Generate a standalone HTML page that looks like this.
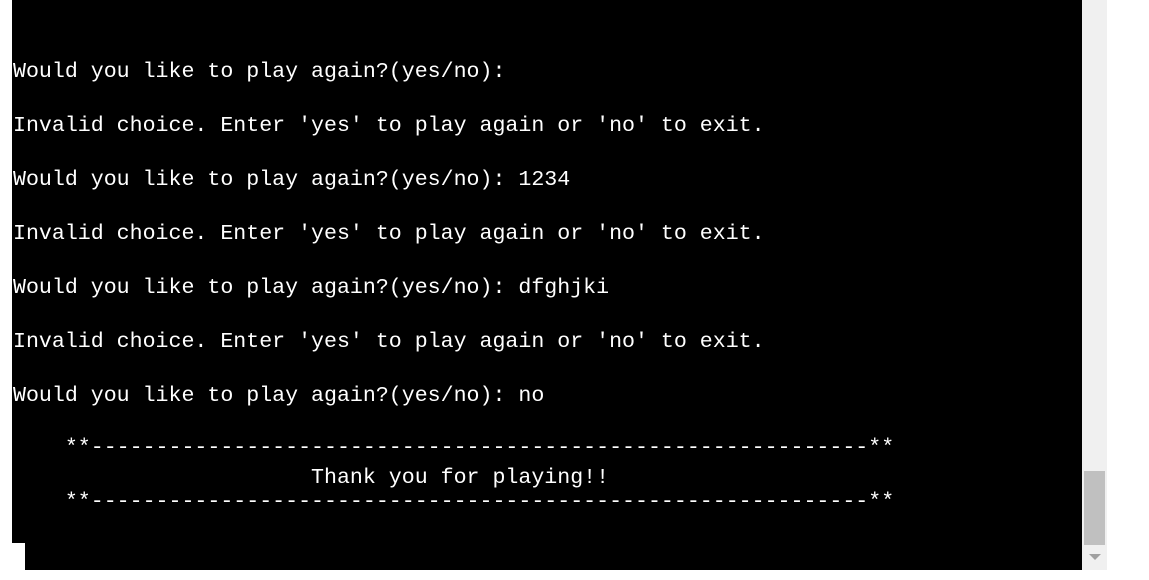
<!DOCTYPE html>
<html><head><meta charset="utf-8"><style>
html,body{margin:0;padding:0;width:1149px;height:580px;background:#fff;overflow:hidden;position:relative}
.t1{position:absolute;left:12px;top:0;width:1070px;height:543px;background:#000}
.t2{position:absolute;left:25px;top:543px;width:1057px;height:27px;background:#000}
.l{position:absolute;left:13px;color:#fff;font:21.6px/27px "Liberation Mono",monospace;white-space:pre}
.sb{position:absolute;left:1082px;top:0;width:25px;height:570px;background:#f0f0f0}
.th{position:absolute;left:1084px;top:471px;width:21px;height:74px;background:#c0c0c0}
.ar{position:absolute;left:1089px;top:554px;width:0;height:0;border-left:6px solid transparent;border-right:6px solid transparent;border-top:6px solid #a0a0a0}
</style></head><body>
<div class="t1"></div><div class="t2"></div>
<div class="sb"></div><div class="th"></div><div class="ar"></div>
<div class="l" style="top:59px">Would you like to play again?(yes/no):</div>
<div class="l" style="top:113px">Invalid choice. Enter 'yes' to play again or 'no' to exit.</div>
<div class="l" style="top:167px">Would you like to play again?(yes/no): 1234</div>
<div class="l" style="top:221px">Invalid choice. Enter 'yes' to play again or 'no' to exit.</div>
<div class="l" style="top:275px">Would you like to play again?(yes/no): dfghjki</div>
<div class="l" style="top:329px">Invalid choice. Enter 'yes' to play again or 'no' to exit.</div>
<div class="l" style="top:383px">Would you like to play again?(yes/no): no</div>
<div class="l" style="top:435px">    **------------------------------------------------------------**</div>
<div class="l" style="top:465px">                       Thank you for playing!!</div>
<div class="l" style="top:489px">    **------------------------------------------------------------**</div>
</body></html>
